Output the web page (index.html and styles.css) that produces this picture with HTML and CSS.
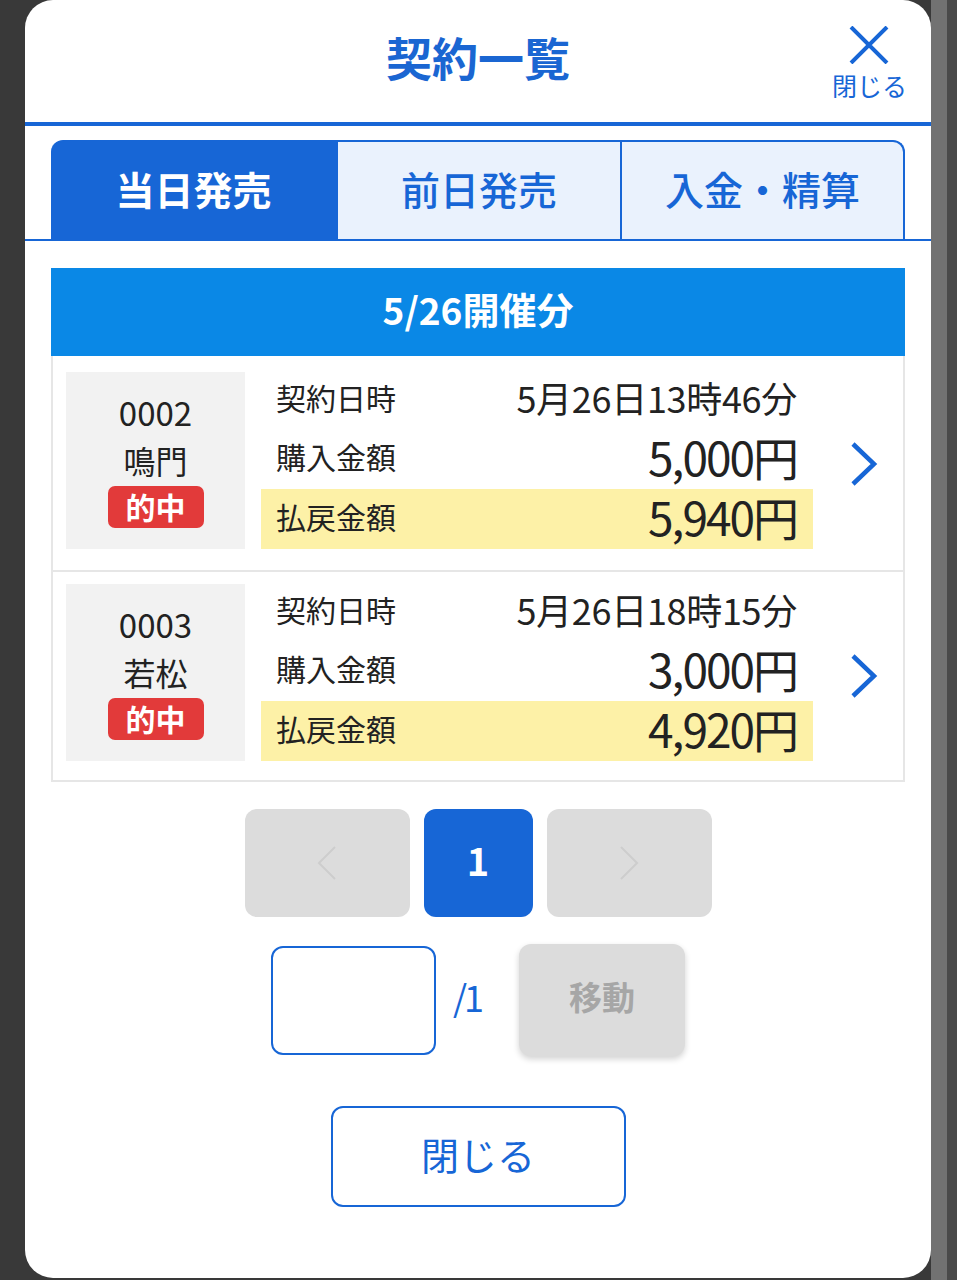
FILE: index.html
```html
<!DOCTYPE html>
<html lang="ja">
<head>
<meta charset="utf-8">
<title>契約一覧</title>
<link rel="stylesheet" href="styles.css">
</head>
<body>
<div class="modal">
  <header class="head">
    <div></div>
    <h1 class="title">契約一覧</h1>
    <button class="xclose">
      <svg class="xicon" width="40" height="38" viewBox="0 0 40 38"><path d="M2 1 L38 37 M38 1 L2 37" stroke="#1766d6" stroke-width="4" fill="none"/></svg>
      <span>閉じる</span>
    </button>
  </header>

  <nav class="tabbar">
    <div class="tab active">当日発売</div>
    <div class="tab">前日発売</div>
    <div class="tab last">入金・精算</div>
  </nav>

  <main class="content">
    <div class="section-head">5/26開催分</div>
    <div class="list">
      <div class="row">
        <div class="place">
          <div class="no">0002</div>
          <div class="name">鳴門</div>
          <div class="badge">的中</div>
        </div>
        <div class="info">
          <div class="line"><span class="lbl">契約日時</span><span class="val date">5月26日13時46分</span></div>
          <div class="line"><span class="lbl">購入金額</span><span class="val big">5,000円</span></div>
          <div class="line hl"><span class="lbl">払戻金額</span><span class="val big">5,940円</span></div>
        </div>
        <div class="chev">
          <svg width="30" height="46" viewBox="0 0 30 46"><path d="M4 3 L25 23 L4 43" stroke="#1766d6" stroke-width="4.5" fill="none"/></svg>
        </div>
      </div>
      <div class="row">
        <div class="place">
          <div class="no">0003</div>
          <div class="name">若松</div>
          <div class="badge">的中</div>
        </div>
        <div class="info">
          <div class="line"><span class="lbl">契約日時</span><span class="val date">5月26日18時15分</span></div>
          <div class="line"><span class="lbl">購入金額</span><span class="val big">3,000円</span></div>
          <div class="line hl"><span class="lbl">払戻金額</span><span class="val big">4,920円</span></div>
        </div>
        <div class="chev">
          <svg width="30" height="46" viewBox="0 0 30 46"><path d="M4 3 L25 23 L4 43" stroke="#1766d6" stroke-width="4.5" fill="none"/></svg>
        </div>
      </div>
    </div>

    <div class="pager">
      <div class="pbtn nav"><svg width="22" height="36" viewBox="0 0 22 36"><path d="M19 2 L3 18 L19 34" stroke="#cdcdcd" stroke-width="2" fill="none"/></svg></div>
      <div class="pbtn cur">1</div>
      <div class="pbtn nav"><svg width="22" height="36" viewBox="0 0 22 36"><path d="M3 2 L19 18 L3 34" stroke="#cdcdcd" stroke-width="2" fill="none"/></svg></div>
    </div>

    <div class="jump">
      <div class="jinput"></div>
      <span class="total">/1</span>
      <div class="jbtn">移動</div>
    </div>

    <div class="closebar">
      <div class="closebtn">閉じる</div>
    </div>
  </main>
</div>
</body>
</html>
```
FILE: styles.css
```css
* { box-sizing: border-box; }
html, body { margin: 0; padding: 0; }
body {
  width: 957px;
  height: 1280px;
  overflow: hidden;
  font-family: "Noto Sans CJK JP", "Noto Sans", sans-serif;
  background: linear-gradient(to right, #393939 0, #393939 931px, #727272 931px, #727272 947px, #4a4a4a 947px);
}
.modal {
  margin-left: 25px;
  width: 906px;
  height: 1278px;
  background: #fff;
  border-radius: 28px;
  overflow: hidden;
}
.head {
  height: 126px;
  border-bottom: 4px solid #1766d6;
  display: grid;
  grid-template-columns: 1fr auto 1fr;
  align-items: start;
}
.title {
  margin: 0;
  padding-top: 29px;
  font-size: 46px;
  font-weight: 700;
  line-height: 1.2;
  color: #1a66d2;
}
.xclose {
  justify-self: end;
  margin-right: 24px;
  margin-top: 26px;
  border: 0;
  background: none;
  padding: 0;
  display: flex;
  flex-direction: column;
  align-items: center;
  font-family: inherit;
  color: #1766d6;
  font-size: 25px;
  line-height: 1;
}
.xicon { display: block; margin-bottom: 9px; }
.tabbar {
  display: flex;
  padding: 14px 26px 0;
  border-bottom: 2px solid #1766d6;
}
.tab {
  flex: 0 0 284px;
  height: 99px;
  padding-bottom: 6px;
  display: flex;
  align-items: center;
  justify-content: center;
  background: #eaf2fd;
  color: #1766d6;
  font-size: 39px;
  font-weight: 500;
  border-top: 2px solid #1766d6;
  border-right: 2px solid #1766d6;
}
.tab.active {
  flex-basis: 287px;
  background: #1766d6;
  color: #fff;
  font-weight: 700;
  border-top-left-radius: 12px;
}
.tab.last { flex-basis: 283px; border-top-right-radius: 12px; }
.content { padding: 27px 26px 0; }
.section-head {
  height: 88px;
  padding-bottom: 6px;
  background: #0a88e6;
  color: #fff;
  font-size: 37px;
  font-weight: 700;
  display: flex;
  align-items: center;
  justify-content: center;
}
.list {
  border: 2px solid #e6e6e6;
  border-top: 0;
}
.row {
  display: flex;
  padding: 12px 0 19px 13px;
}
.row:first-child { padding-top: 16px; padding-bottom: 21px; }
.row + .row { border-top: 2px solid #e6e6e6; }
.place {
  width: 179px;
  height: 177px;
  background: #f2f2f2;
  display: flex;
  flex-direction: column;
  align-items: center;
  padding-top: 17px;
  color: #222;
}
.no { font-size: 33px; line-height: 46px; }
.name { font-size: 32px; line-height: 50px; }
.badge {
  margin-top: 1px;
  width: 96px;
  height: 42px;
  border-radius: 7px;
  background: #e23a3a;
  color: #fff;
  font-size: 30px;
  font-weight: 700;
  line-height: 40px;
  text-align: center;
}
.info {
  margin-left: 16px;
  width: 552px;
  height: 177px;
  display: grid;
  grid-template-rows: 57px 60px 60px;
}
.line {
  display: flex;
  align-items: center;
  justify-content: space-between;
  padding: 0 16px 7px 15px;
  color: #222;
}
.line.hl { background: #fdf1a7; }
.lbl { font-size: 30px; }
.val.date { font-size: 36px; letter-spacing: -0.3px; }
.val.big { font-size: 46px; letter-spacing: -2px; }
.chev {
  flex: 1;
  display: flex;
  align-items: center;
  justify-content: center;
  padding-top: 6px;
  padding-left: 12px;
}
.pager {
  margin-top: 27px;
  display: flex;
  justify-content: center;
  gap: 14px;
}
.pbtn {
  height: 108px;
  border-radius: 12px;
  display: flex;
  align-items: center;
  justify-content: center;
}
.pbtn.nav { width: 165px; background: #dcdcdc; }
.pbtn.cur {
  width: 109px;
  padding-bottom: 8px;
  background: #1766d6;
  color: #fff;
  font-size: 38px;
  font-weight: 700;
}
.jump {
  margin-top: 27px;
  display: flex;
  justify-content: center;
  align-items: center;
}
.jinput {
  width: 165px;
  height: 109px;
  border: 2px solid #1766d6;
  border-radius: 12px;
  background: #fff;
}
.total {
  margin-left: 17px;
  margin-right: 38px;
  padding-bottom: 8px;
  color: #1766d6;
  font-size: 36px;
  letter-spacing: -3px;
}
.jbtn {
  width: 166px;
  height: 112px;
  padding-bottom: 8px;
  background: #dcdcdc;
  border-radius: 12px;
  box-shadow: 0 3px 6px rgba(0,0,0,0.18);
  color: #a6a6a6;
  font-size: 33px;
  font-weight: 700;
  display: flex;
  align-items: center;
  justify-content: center;
}
.closebar {
  margin-top: 50px;
  display: flex;
  justify-content: center;
}
.closebtn {
  width: 295px;
  height: 101px;
  padding-bottom: 6px;
  border: 2px solid #1766d6;
  border-radius: 12px;
  color: #1766d6;
  font-size: 38px;
  display: flex;
  align-items: center;
  justify-content: center;
}
```
